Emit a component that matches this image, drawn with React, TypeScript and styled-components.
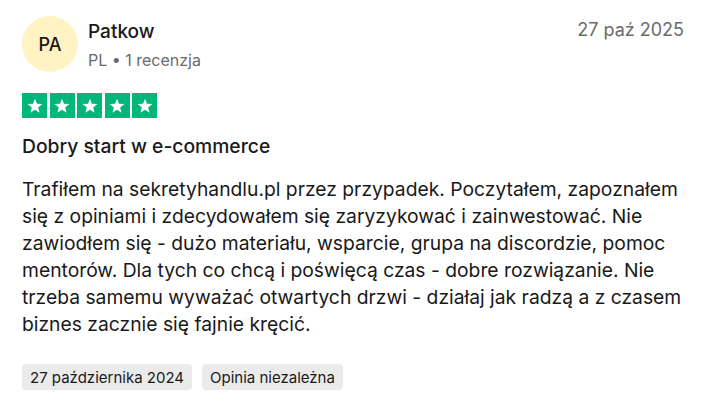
import styled, { createGlobalStyle } from 'styled-components';

const GlobalStyle = createGlobalStyle`
  body {
    margin: 0;
    background: #fff;
    font-family: Inter, "Noto Sans", sans-serif;
    color: #191919;
  }
`;

const Star = () => (
  <svg viewBox="0 0 24 24" width="18" height="18">
    <path
      d="M12 2.2l2.6 6.9 7.3.3-5.7 4.6 2 7.1L12 17l-6.2 4.1 2-7.1-5.7-4.6 7.3-.3z"
      fill="#fff"
    />
  </svg>
);

export default function App() {
  return (
    <>
      <GlobalStyle />
      <Card>
        <Header>
          <Avatar>PA</Avatar>
          <Info>
            <Name>Patkow</Name>
            <Meta>PL • 1 recenzja</Meta>
          </Info>
          <DateText>27 paź 2025</DateText>
        </Header>
        <Stars>
          {[0, 1, 2, 3, 4].map((i) => (
            <StarBox key={i}>
              <Star />
            </StarBox>
          ))}
        </Stars>
        <Title>Dobry start w e-commerce</Title>
        <Body>
          Trafiłem na sekretyhandlu.pl przez przypadek. Poczytałem, zapoznałem się z opiniami i
          zdecydowałem się zaryzykować i zainwestować. Nie zawiodłem się - dużo materiału, wsparcie,
          grupa na discordzie, pomoc mentorów. Dla tych co chcą i poświęcą czas - dobre rozwiązanie.
          Nie trzeba samemu wyważać otwartych drzwi - działaj jak radzą a z czasem biznes zacznie się
          fajnie kręcić.
        </Body>
        <Tags>
          <Tag>27 października 2024</Tag>
          <Tag>Opinia niezależna</Tag>
        </Tags>
      </Card>
    </>
  );
}

const Card = styled.div`
  padding: 16px 19px 0 22px;
`;

const Header = styled.div`
  display: flex;
  align-items: flex-start;
  gap: 10px;
`;

const Avatar = styled.div`
  width: 56px;
  height: 56px;
  border-radius: 50%;
  background: #fff3c4;
  display: flex;
  align-items: center;
  justify-content: center;
  font-size: 18px;
  font-weight: 500;
  color: #191919;
  flex-shrink: 0;
`;

const Info = styled.div`
  flex: 1;
  display: flex;
  flex-direction: column;
  gap: 4px;
`;

const Name = styled.div`
  font-size: 19px;
  font-weight: 500;
  line-height: 24px;
  margin-top: 4px;
`;

const Meta = styled.div`
  font-size: 16px;
  color: #6b6b6b;
  line-height: 24px;
`;

const DateText = styled.div`
  font-size: 18px;
  color: #6b6b6b;
  line-height: 24px;
  margin-top: 2px;
`;

const Stars = styled.div`
  display: flex;
  gap: 2.5px;
  margin-top: 21px;
`;

const StarBox = styled.div`
  width: 25px;
  height: 25px;
  background: #00b67a;
  display: flex;
  align-items: center;
  justify-content: center;
`;

const Title = styled.h2`
  margin: 16px 0 0;
  font-size: 19.3px;
  font-weight: 500;
  line-height: 24px;
`;

const Body = styled.p`
  margin: 18px 0 0;
  font-size: 19.3px;
  line-height: 27px;
  color: #191919;
`;

const Tags = styled.div`
  display: flex;
  gap: 10px;
  margin-top: 26px;
`;

const Tag = styled.span`
  background: #ebebeb;
  border-radius: 4px;
  padding: 0 8px;
  height: 26px;
  display: flex;
  align-items: center;
  font-size: 15px;
  color: #191919;
`;
